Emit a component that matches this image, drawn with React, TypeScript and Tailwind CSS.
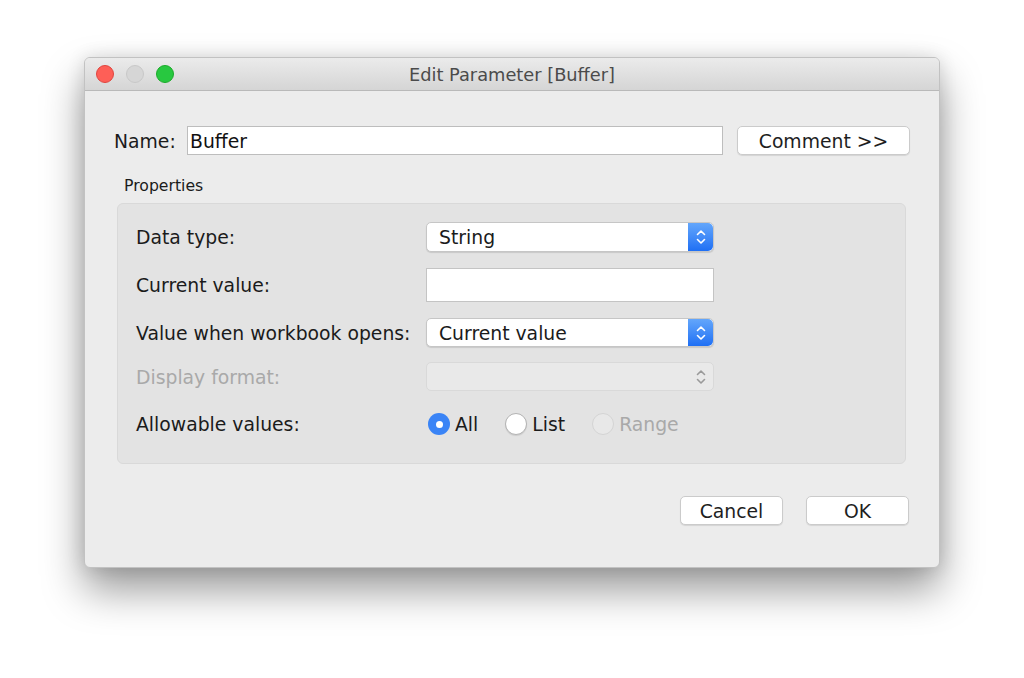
import React from "react";

const font = { fontFamily: '"DejaVu Sans", "Liberation Sans", sans-serif' };

function Stepper({ disabled }: { disabled?: boolean }) {
  const stroke = disabled ? "#9a9a9a" : "#ffffff";
  return (
    <div
      className={
        disabled
          ? "flex h-full w-[25px] items-center justify-center"
          : "flex h-full w-[25px] items-center justify-center rounded-r-[5px] bg-gradient-to-b from-[#63a6fb] to-[#1e6ff4]"
      }
    >
      <svg width="12" height="20" viewBox="0 0 12 20" fill="none">
        <path d="M2.5 7.5 L6 4 L9.5 7.5" stroke={stroke} strokeWidth="1.6" strokeLinecap="round" strokeLinejoin="round" />
        <path d="M2.5 12.5 L6 16 L9.5 12.5" stroke={stroke} strokeWidth="1.6" strokeLinecap="round" strokeLinejoin="round" />
      </svg>
    </div>
  );
}

function Select({ value, disabled }: { value: string; disabled?: boolean }) {
  return (
    <div
      className={
        disabled
          ? "flex h-[29px] w-[288px] items-center rounded-[5px] border border-[#d9d9d9] bg-[#e9e9e9]"
          : "flex h-full w-[288px] items-center rounded-[5px] border border-[#c6c6c6] bg-white shadow-[0_1px_1px_rgba(0,0,0,0.12)]"
      }
    >
      <div className="flex-1 pl-[12px] pt-[3px] text-[18.8px] leading-none text-[#1b1b1b]">{value}</div>
      <Stepper disabled={disabled} />
    </div>
  );
}

function Label({ children, muted, width }: { children: React.ReactNode; muted?: boolean; width: string }) {
  return (
    <div className={`${width} pt-[3px] text-[18.8px] leading-none ${muted ? "text-[#a9a9a9]" : "text-[#1b1b1b]"}`}>
      {children}
    </div>
  );
}

function Radio({ label, checked, disabled }: { label: string; checked?: boolean; disabled?: boolean }) {
  return (
    <div className="flex items-center gap-[5px]">
      {checked ? (
        <div className="flex h-[22px] w-[22px] items-center justify-center rounded-full bg-[#3a84f6]">
          <div className="h-[7px] w-[7px] rounded-full bg-white" />
        </div>
      ) : (
        <div
          className={
            disabled
              ? "h-[22px] w-[22px] rounded-full border border-[#d4d4d4] bg-[#e8e8e8]"
              : "h-[22px] w-[22px] rounded-full border border-[#b3b3b3] bg-white shadow-[0_1px_1px_rgba(0,0,0,0.1)]"
          }
        />
      )}
      <span className={disabled ? "pt-[3px] text-[18.8px] leading-none text-[#a9a9a9]" : "pt-[3px] text-[18.8px] leading-none text-[#1b1b1b]"}>
        {label}
      </span>
    </div>
  );
}

function Button({ children, width }: { children: React.ReactNode; width: string }) {
  return (
    <div
      className={`${width} flex h-[29px] items-center justify-center rounded-[5px] border border-[#cbcbcb] bg-white pt-[3px] text-[18.8px] leading-none text-[#1e1e1e] shadow-[0_1px_1px_rgba(0,0,0,0.1)]`}
    >
      {children}
    </div>
  );
}

export default function App() {
  return (
    <div className="h-[678px] w-[1024px] overflow-hidden bg-white pl-[84px] pt-[57px]" style={font}>
      <div className="flex h-[511px] w-[856px] flex-col overflow-hidden rounded-[6px] border border-[#c2c2c2] bg-[#ececec] shadow-[0_22px_42px_rgba(0,0,0,0.4),0_0_18px_rgba(0,0,0,0.12)]">
        {/* title bar */}
        <div className="relative flex h-[33px] shrink-0 items-center border-b border-[#b9b9b9] bg-gradient-to-b from-[#ebebeb] to-[#d5d5d5]">
          <div className="flex items-center gap-[12px] pl-[11px]">
            <div className="h-[18px] w-[18px] rounded-full border border-[#e0443e] bg-[#fe5f57]" />
            <div className="h-[18px] w-[18px] rounded-full border border-[#c8c8c8] bg-[#d6d6d6]" />
            <div className="h-[18px] w-[18px] rounded-full border border-[#1aab29] bg-[#28c840]" />
          </div>
          <div className="absolute inset-0 flex items-center justify-center pt-[2px] text-[17.8px] leading-none text-[#4b4b4b]">
            Edit Parameter [Buffer]
          </div>
        </div>

        {/* body */}
        <div className="flex flex-col px-[29px] pt-[35px]">
          <div className="flex h-[29px] items-center">
            <Label width="w-[73px]">Name:</Label>
            <div className="flex h-full w-[536px] items-center border border-[#bdbdbd] bg-white pl-[2px] pt-[3px] text-[18.8px] leading-none text-[#111]">
              Buffer
            </div>
            <div className="ml-[14px]">
              <Button width="w-[173px]">Comment &gt;&gt;</Button>
            </div>
          </div>

          <div className="ml-[10px] mt-[21px] text-[15.7px] leading-[20px] text-[#1b1b1b]">Properties</div>

          <div className="ml-[3px] mt-[7px] flex h-[261px] w-[789px] flex-col rounded-[6px] border border-[#d9d9d9] bg-[#e3e3e3] pl-[18px] pt-[18px]">
            <div className="flex h-[30px] items-center">
              <Label width="w-[290px]">Data type:</Label>
              <Select value="String" />
            </div>
            <div className="mt-[16px] flex h-[34px] items-center">
              <Label width="w-[290px]">Current value:</Label>
              <div className="h-full w-[288px] border border-[#c4c4c4] bg-white" />
            </div>
            <div className="mt-[16px] flex h-[29px] items-center">
              <Label width="w-[290px]">Value when workbook opens:</Label>
              <Select value="Current value" />
            </div>
            <div className="mt-[15px] flex h-[29px] items-center">
              <Label width="w-[290px]" muted>
                Display format:
              </Label>
              <Select value="" disabled />
            </div>
            <div className="mt-[22px] flex h-[22px] items-center">
              <Label width="w-[292px]">Allowable values:</Label>
              <div className="flex items-center gap-[27px]">
                <Radio label="All" checked />
                <Radio label="List" />
                <Radio label="Range" disabled />
              </div>
            </div>
          </div>

          <div className="mt-[32px] flex justify-end gap-[23px] pr-[1px]">
            <Button width="w-[103px]">Cancel</Button>
            <Button width="w-[103px]">OK</Button>
          </div>
        </div>
      </div>
    </div>
  );
}
